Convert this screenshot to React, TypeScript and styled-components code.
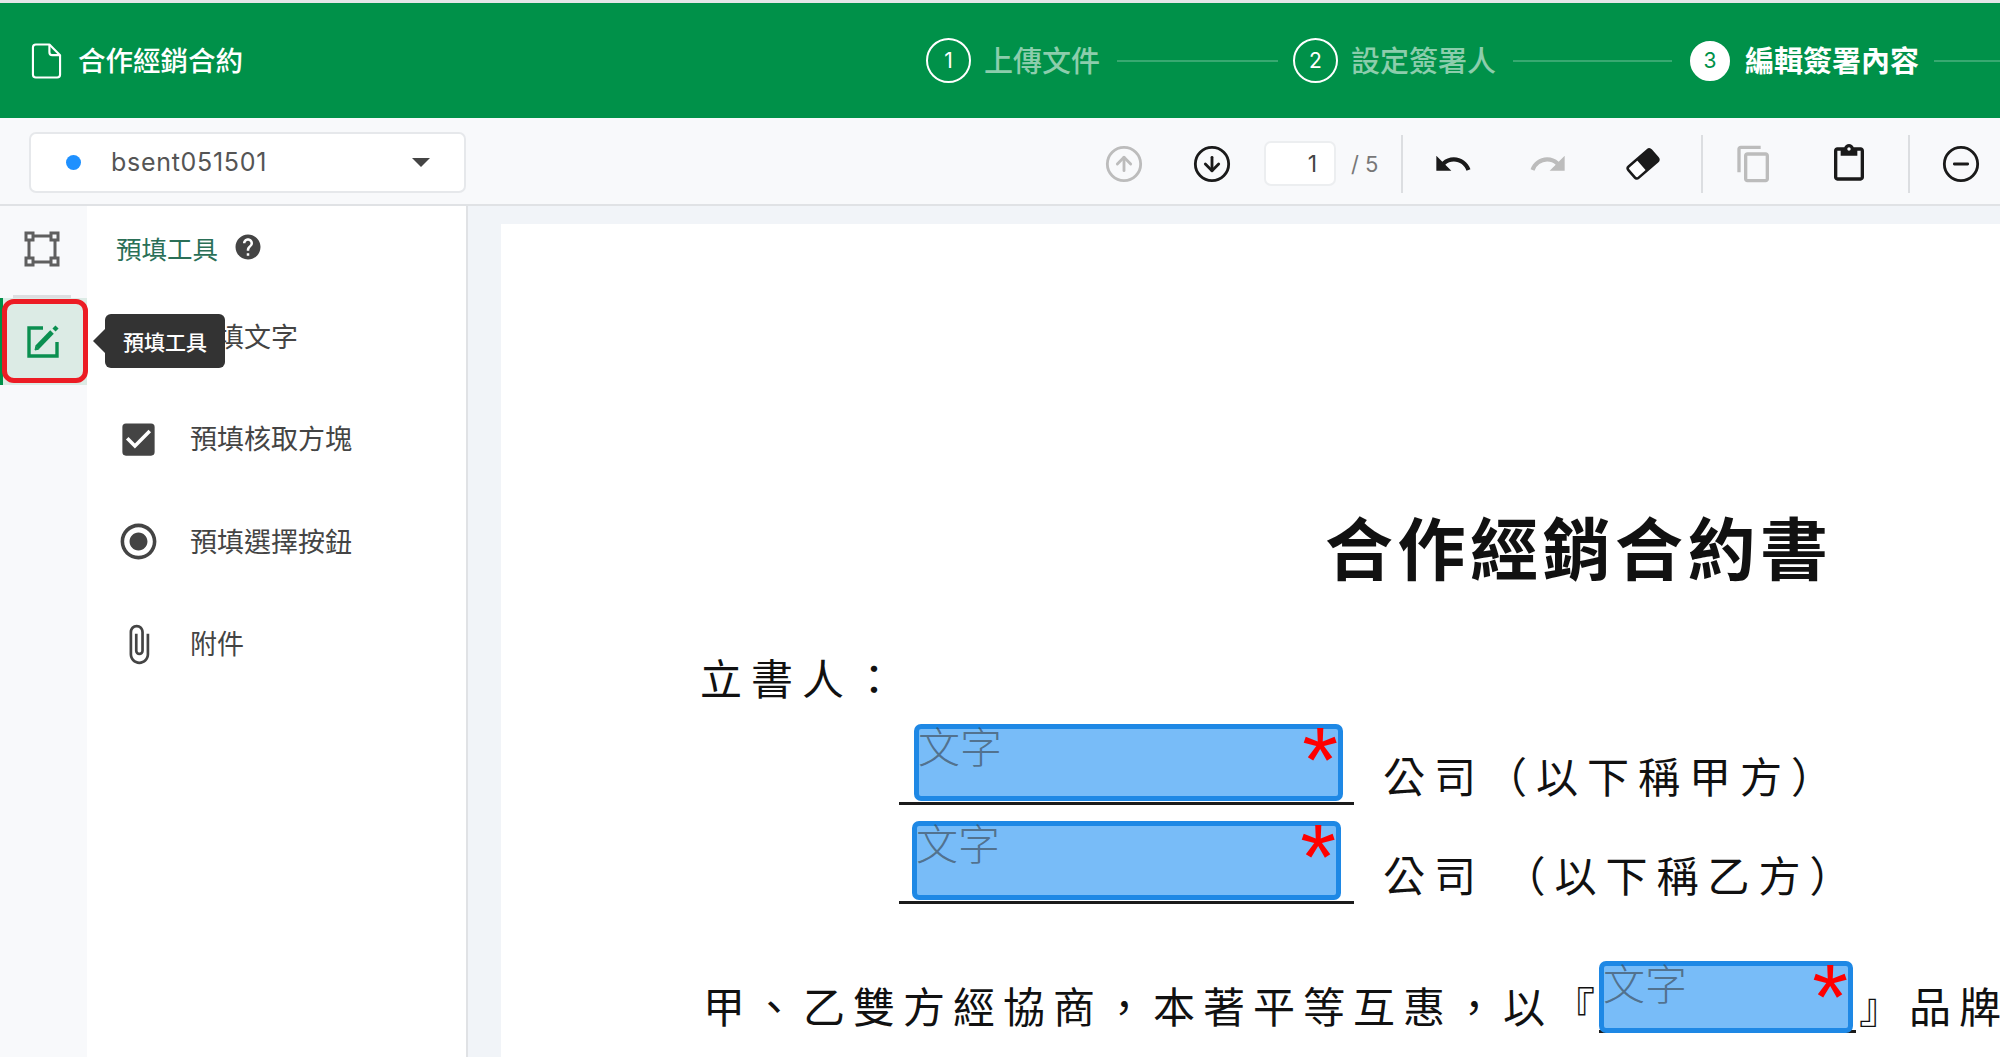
import React, { type JSX } from "react";
import styled, { createGlobalStyle } from "styled-components";
import { CircleArrowDown, CircleArrowUp, CircleMinus } from "lucide-react";
import {
  MdAttachFile,
  MdCheckBox,
  MdContentCopy,
  MdContentPaste,
  MdHelp,
  MdRadioButtonChecked,
  MdRedo,
  MdUndo,
} from "react-icons/md";

const UI_FONT = `"Noto Sans CJK TC", "Inter", sans-serif`;
const LATIN_FONT = `"Inter", "Noto Sans CJK TC", sans-serif`;

const GlobalStyle = createGlobalStyle`
  html, body {
    margin: 0;
    height: 100%;
    overflow: hidden;
    background: #e4e6e8;
  }
  #root {
    height: 100%;
  }
  *, *::before, *::after {
    box-sizing: border-box;
  }
`;

const Shell = styled.div`
  height: 100%;
  padding-top: 3px;
  display: flex;
  flex-direction: column;
  font-family: ${UI_FONT};
`;

const Header = styled.header`
  flex: 0 0 115px;
  display: flex;
  align-items: center;
  padding-left: 31px;
  background: #009149;
  overflow: hidden;
`;

const DocName = styled.div`
  display: flex;
  align-items: center;
  gap: 16px;
  width: 212px;
  color: #fff;
  font-size: 27.5px;
  font-weight: 500;
  white-space: nowrap;
`;

const DocNameText = styled.span`
  margin-top: -4px;
`;

const Steps = styled.ol`
  flex: 1;
  display: flex;
  align-items: center;
  margin: 0 0 0 683px;
  padding: 0;
  list-style: none;
`;

const Step = styled.li<{ $active?: boolean; $grow?: boolean }>`
  display: flex;
  align-items: center;
  flex: ${(p) => (p.$grow ? 1 : "0 0 auto")};
  gap: 15px;
  font-size: 29px;
  font-weight: ${(p) => (p.$active ? 700 : 500)};
  line-height: 40px;
  white-space: nowrap;
  color: ${(p) => (p.$active ? "#fff" : "#8ccdac")};
`;

const StepLabel = styled.span<{ $active?: boolean }>`
  margin: -4px ${(p) => (p.$active ? 0 : 2)}px 0 ${(p) => (p.$active ? 0 : -2)}px;
`;

const StepNumber = styled.span<{ $active?: boolean }>`
  width: ${(p) => (p.$active ? 40 : 45)}px;
  height: ${(p) => (p.$active ? 40 : 45)}px;
  margin-left: ${(p) => (p.$active ? 3 : 0)}px;
  border-radius: 50%;
  display: flex;
  align-items: center;
  justify-content: center;
  border: 2px solid #fff;
  background: ${(p) => (p.$active ? "#fff" : "transparent")};
  color: ${(p) => (p.$active ? "#009149" : "#fff")};
  font-family: ${LATIN_FONT};
  font-size: 21px;
  font-weight: 400;
`;

const StepLine = styled.span<{ $width?: number; $last?: boolean }>`
  flex: ${(p) => (p.$width ? `0 0 ${p.$width}px` : 1)};
  height: 2px;
  margin-right: ${(p) => (p.$last ? 0 : 15)}px;
  background: rgba(255, 255, 255, 0.22);
`;

const Toolbar = styled.div`
  flex: 0 0 88px;
  display: flex;
  align-items: center;
  padding-left: 29px;
  padding-top: 2px;
  background: #f8f9fb;
  border-bottom: 2px solid #e0e2e5;
  overflow: hidden;
`;

const SignerSelect = styled.div`
  flex: 0 0 437px;
  height: 61px;
  display: flex;
  align-items: center;
  padding: 0 34px 0 35px;
  background: #fff;
  border: 2px solid #e6e8eb;
  border-radius: 7px;
  color: #555;
  font-family: ${LATIN_FONT};
  font-size: 25px;
  letter-spacing: 0.7px;
`;

const SignerDot = styled.span`
  width: 15px;
  height: 15px;
  margin-right: 30px;
  border-radius: 50%;
  background: #1e90ff;
`;

const Caret = styled.span`
  width: 0;
  height: 0;
  margin-left: auto;
  border-left: 9px solid transparent;
  border-right: 9px solid transparent;
  border-top: 9px solid #444;
`;

const Tools = styled.div`
  flex: none;
  display: flex;
  align-items: center;
  margin-left: 614px;
  margin-top: 3px;
`;

const ToolButton = styled.button<{ $width: number; $muted?: boolean }>`
  flex: 0 0 ${(p) => p.$width}px;
  height: 44px;
  padding: 0;
  display: flex;
  align-items: center;
  justify-content: center;
  border: 0;
  background: none;
  color: ${(p) => (p.$muted ? "#bcbcbc" : "#1a1a1a")};
`;

const PageInput = styled.div`
  flex: 0 0 72px;
  height: 45px;
  margin-left: 8px;
  padding-right: 17px;
  display: flex;
  align-items: center;
  justify-content: flex-end;
  background: #fff;
  border: 2px solid #eceef0;
  border-radius: 7px;
  color: #444;
  font-family: ${LATIN_FONT};
  font-size: 23px;
`;

const PageTotal = styled.span`
  flex: 0 0 27px;
  margin-left: 15px;
  color: #777;
  font-family: ${LATIN_FONT};
  font-size: 22px;
  white-space: nowrap;
`;

const ToolDivider = styled.span<{ $gap: number }>`
  flex: 0 0 2px;
  height: 58px;
  margin-left: ${(p) => p.$gap}px;
  background: #dcdee1;
`;

const Body = styled.div`
  flex: 1;
  min-height: 0;
  display: flex;
`;

const Rail = styled.nav`
  flex: 0 0 87px;
  display: flex;
  flex-direction: column;
  background: #f8f9fb;
`;

const RailItem = styled.div`
  height: 89px;
  padding: 0 3px 3px 0;
  display: flex;
  align-items: center;
  justify-content: center;
  color: #5f5f5f;
`;

const RailDivider = styled.div`
  height: 3px;
  margin: 0 16px 0 13px;
  background: #dcdee0;
`;

const ActiveRailItem = styled.div`
  position: relative;
  height: 87px;
  display: flex;
  align-items: center;
  justify-content: center;
  padding-right: 5px;
  background: #dcebe5;
  border-left: 3px solid #009149;

  &::after {
    content: "";
    position: absolute;
    left: -1px;
    top: 1px;
    width: 86px;
    height: 84px;
    border: 5px solid #ec1c24;
    border-radius: 12px;
  }
`;

const Tooltip = styled.div`
  position: absolute;
  z-index: 2;
  left: 102px;
  top: 16px;
  width: 120px;
  height: 54px;
  display: flex;
  align-items: center;
  justify-content: center;
  background: #333;
  border-radius: 6px;
  color: #fff;
  font-size: 21px;
  font-weight: 500;
  white-space: nowrap;

  &::before {
    content: "";
    position: absolute;
    left: -12px;
    top: 15px;
    border-top: 12px solid transparent;
    border-bottom: 12px solid transparent;
    border-right: 12px solid #333;
  }
`;

const ToolPanel = styled.aside`
  flex: 0 0 381px;
  background: #fff;
  border-right: 2px solid #e0e2e5;
`;

const PanelTitle = styled.div`
  height: 78px;
  padding: 4px 0 0 29px;
  display: flex;
  align-items: center;
  gap: 15px;
  font-size: 25.5px;
  color: #2a6f57;
`;

const HelpIcon = styled(MdHelp)`
  color: #444;
`;

const ToolRow = styled.div`
  height: 102.5px;
  padding-left: 30px;
  display: flex;
  align-items: center;
  color: #444;
  font-size: 27px;
`;

const ToolGlyph = styled.span`
  flex: 0 0 43px;
  margin: 3px 30px 0 0;
  display: flex;
  align-items: center;
  justify-content: center;
`;

const Viewer = styled.main`
  flex: 1;
  min-width: 0;
  padding: 18px 0 0 33px;
  background: #f1f4f8;
`;

/* the PDF page is a free canvas: its text and fields stay where the document put them */
const PdfPage = styled.div`
  position: relative;
  height: 100%;
  background: #fff;
  overflow: hidden;
  color: #111;
`;

const DocLine = styled.div<{ $x: number; $y: number; $size?: number; $track?: number; $bold?: boolean }>`
  position: absolute;
  left: ${(p) => p.$x}px;
  top: ${(p) => p.$y}px;
  font-size: ${(p) => p.$size ?? 42}px;
  font-weight: ${(p) => (p.$bold ? 700 : 400)};
  letter-spacing: ${(p) => p.$track ?? 9}px;
  line-height: 1;
  white-space: pre;
`;

const Rule = styled.div<{ $x: number; $y: number; $w: number }>`
  position: absolute;
  left: ${(p) => p.$x}px;
  top: ${(p) => p.$y}px;
  width: ${(p) => p.$w}px;
  height: 3px;
  background: #1b1b1b;
`;

const Field = styled.div<{ $x: number; $y: number; $w: number; $h: number }>`
  position: absolute;
  left: ${(p) => p.$x}px;
  top: ${(p) => p.$y}px;
  width: ${(p) => p.$w}px;
  height: ${(p) => p.$h}px;
  background: #78bcf8;
  border: 5px solid #1e88e5;
  border-radius: 7px;
`;

const FieldLabel = styled.span`
  display: block;
  margin: -5px 0 0 -1px;
  color: rgba(60, 70, 80, 0.65);
  font-size: 42px;
  font-weight: 300;
  line-height: 1;
`;

const Required = styled.span`
  position: absolute;
  right: 0;
  top: -15px;
  color: #ff0000;
  font-family: "Liberation Sans", sans-serif;
  font-size: 92px;
  line-height: 1;
`;

function FileIcon(): JSX.Element {
  return (
    <svg width="32" height="38" viewBox="0 0 32 38" fill="none" stroke="#fff" strokeWidth="2.2" strokeLinejoin="round">
      <path d="M5 2h14l11 11v20a3 3 0 0 1-3 3H5a3 3 0 0 1-3-3V5a3 3 0 0 1 3-3z" />
      <path d="M19 2v8a3 3 0 0 0 3 3h8" />
    </svg>
  );
}

function EraserIcon(): JSX.Element {
  return (
    <svg width="36" height="34" viewBox="0 0 36 34">
      <g transform="rotate(-41 18 17)">
        <rect x="3" y="9.5" width="30" height="15" rx="2.5" fill="#fff" stroke="#1a1a1a" strokeWidth="2.6" />
        <path d="M16 9.5h14.5a2.5 2.5 0 0 1 2.5 2.5v10a2.5 2.5 0 0 1-2.5 2.5H16z" fill="#1a1a1a" />
      </g>
    </svg>
  );
}

function SelectAreaIcon(): JSX.Element {
  return (
    <svg width="36" height="36" viewBox="0 0 36 36" fill="none" stroke="currentColor" strokeWidth="3">
      <path d="M5 9v18M9 5h18M31 9v18M9 31h18" />
      <rect x="2" y="2" width="7" height="7" />
      <rect x="27" y="2" width="7" height="7" />
      <rect x="2" y="27" width="7" height="7" />
      <rect x="27" y="27" width="7" height="7" />
    </svg>
  );
}

function FillToolIcon(): JSX.Element {
  return (
    <svg width="34" height="34" viewBox="0 0 34 34" fill="none" stroke="#0a8f50">
      <path d="M17 3H3v28h28V17" strokeWidth="3.4" />
      <path d="M11 22.5 26 7" strokeWidth="5" />
      <path d="M28 5l3-3" strokeWidth="4.4" />
      <path d="M9 25l.8-3.6 2.8 2.8z" fill="#0a8f50" strokeWidth="1" />
    </svg>
  );
}

const PLACEHOLDER = "文字";

function FillField(props: { x: number; y: number; w: number; h: number }): JSX.Element {
  return (
    <Field $x={props.x} $y={props.y} $w={props.w} $h={props.h}>
      <FieldLabel>{PLACEHOLDER}</FieldLabel>
      <Required>*</Required>
    </Field>
  );
}

const FILL_TOOLS = [
  { label: "預填核取方塊", icon: <MdCheckBox size={43} /> },
  { label: "預填選擇按鈕", icon: <MdRadioButtonChecked size={43} /> },
  { label: "附件", icon: <MdAttachFile size={43} /> },
];

export default function App(): JSX.Element {
  return (
    <Shell lang="zh-Hant">
      <GlobalStyle />

      <Header>
        <DocName>
          <FileIcon />
          <DocNameText>合作經銷合約</DocNameText>
        </DocName>
        <Steps>
          <Step>
            <StepNumber>1</StepNumber>
            <StepLabel>上傳文件</StepLabel>
            <StepLine $width={161} />
          </Step>
          <Step>
            <StepNumber>2</StepNumber>
            <StepLabel>設定簽署人</StepLabel>
            <StepLine $width={159} />
          </Step>
          <Step $active $grow>
            <StepNumber $active>3</StepNumber>
            <StepLabel $active>編輯簽署內容</StepLabel>
            <StepLine $last />
          </Step>
        </Steps>
      </Header>

      <Toolbar>
        <SignerSelect>
          <SignerDot />
          bsent051501
          <Caret />
        </SignerSelect>
        <Tools>
          <ToolButton $width={88} $muted>
            <CircleArrowUp size={40} strokeWidth={1.7} />
          </ToolButton>
          <ToolButton $width={88}>
            <CircleArrowDown size={40} strokeWidth={1.7} />
          </ToolButton>
          <PageInput>1</PageInput>
          <PageTotal>/ 5</PageTotal>
          <ToolDivider $gap={22} />
          <ToolButton $width={100}>
            <MdUndo size={40} />
          </ToolButton>
          <ToolButton $width={90} $muted>
            <MdRedo size={40} />
          </ToolButton>
          <ToolButton $width={100}>
            <EraserIcon />
          </ToolButton>
          <ToolDivider $gap={8} />
          <ToolButton $width={102} $muted>
            <MdContentCopy size={40} />
          </ToolButton>
          <ToolButton $width={88}>
            <MdContentPaste size={40} />
          </ToolButton>
          <ToolDivider $gap={15} />
          <ToolButton $width={102}>
            <CircleMinus size={40} strokeWidth={1.7} />
          </ToolButton>
        </Tools>
      </Toolbar>

      <Body>
        <Rail>
          <RailItem>
            <SelectAreaIcon />
          </RailItem>
          <RailDivider />
          <ActiveRailItem>
            <FillToolIcon />
            <Tooltip>預填工具</Tooltip>
          </ActiveRailItem>
        </Rail>

        <ToolPanel>
          <PanelTitle>
            預填工具
            <HelpIcon size={30} />
          </PanelTitle>
          <ToolRow>
            <ToolGlyph />
            預填文字
          </ToolRow>
          {FILL_TOOLS.map((tool) => (
            <ToolRow key={tool.label}>
              <ToolGlyph>{tool.icon}</ToolGlyph>
              {tool.label}
            </ToolRow>
          ))}
        </ToolPanel>

        <Viewer>
          <PdfPage>
            <DocLine $x={824} $y={288} $size={68} $track={4.5} $bold>
              合作經銷合約書
            </DocLine>
            <DocLine $x={199} $y={432}>
              立書人：
            </DocLine>

            <Rule $x={398} $y={578} $w={455} />
            <FillField x={413} y={500} w={429} h={77} />
            <DocLine $x={882} $y={530}>
              公司（以下稱甲方）
            </DocLine>

            <Rule $x={398} $y={677} $w={455} />
            <FillField x={411} y={597} w={429} h={79} />
            <DocLine $x={882} $y={629}>
              公司 （以下稱乙方）
            </DocLine>

            <DocLine $x={202} $y={760} $track={8}>
              甲、乙雙方經協商，本著平等互惠，以『
            </DocLine>
            <Rule $x={1098} $y={806} $w={257} />
            <FillField x={1098} y={737} w={254} h={72} />
            <DocLine $x={1358} $y={760} $track={8}>
              』品牌
            </DocLine>
          </PdfPage>
        </Viewer>
      </Body>
    </Shell>
  );
}
